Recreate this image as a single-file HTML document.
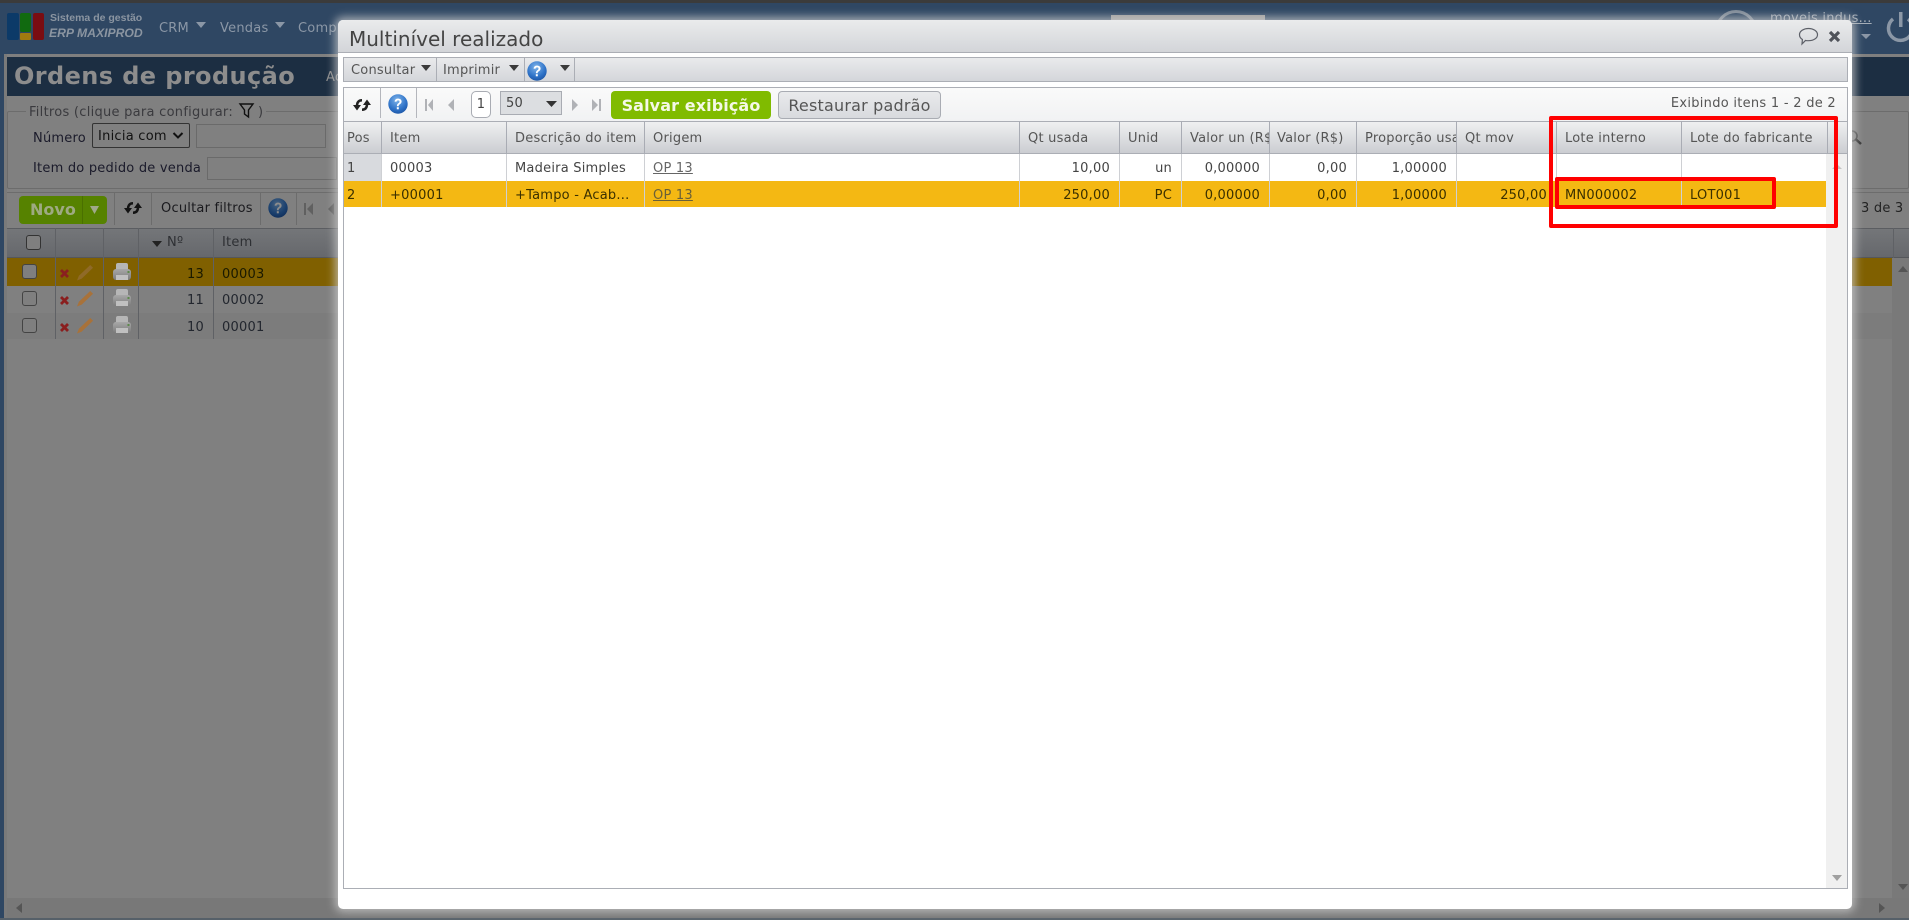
<!DOCTYPE html>
<html lang="pt"><head><meta charset="utf-8"><title>Multinível realizado</title>
<style>
*{box-sizing:border-box}
html,body{margin:0;padding:0;width:1909px;height:920px;overflow:hidden;background:#808080;font-family:"DejaVu Sans","Liberation Sans",sans-serif;font-size:13px;letter-spacing:.22px}
.a{position:absolute}
.t{position:absolute;white-space:nowrap;line-height:20px;height:20px}
.r{text-align:right}
.cell{position:absolute;overflow:hidden;white-space:nowrap;line-height:20px;height:20px}
svg{position:absolute;overflow:visible}
.v{position:absolute;width:1px}
.h{position:absolute;height:1px}
.bt{color:#2a2a2e}
.hd{color:#555}
.rw{color:#444}
.ro{color:#3a3000}
</style></head><body>
<svg width="0" height="0" style="position:absolute"><defs>
<radialGradient id="hg" cx=".45" cy=".3" r=".8"><stop offset="0" stop-color="#7fb4ea"/><stop offset=".6" stop-color="#2f73c8"/><stop offset="1" stop-color="#174d9c"/></radialGradient>
<linearGradient id="pb" x1="0" y1="0" x2="0" y2="1"><stop offset="0" stop-color="#a8a8a8"/><stop offset="1" stop-color="#7c7c7c"/></linearGradient>
<symbol id="help" viewBox="0 0 20 20"><circle cx="10" cy="10" r="9.7" fill="url(#hg)"/><path d="M6.600 7.600C6.800 5.500 8.200 4.600 10.100 4.600c2.100 0 3.500 1.100 3.500 2.900 0 1.500-.9 2.200-1.900 2.900-.8.6-1 .9-1 1.900H8.900c0-1.500.3-2.100 1.300-2.900.9-.6 1.300-1 1.300-1.800 0-.8-.5-1.200-1.400-1.200-1 0-1.400.5-1.600 1.300z" fill="#fff"/><rect x="8.800" y="13.200" width="2" height="2.100" fill="#fff"/></symbol>
<symbol id="ref" viewBox="0 0 18 14"><path d="M4 8C4 4 6 2.300 9 2.300M14 6C14 10 12 11.700 9 11.700" fill="none" stroke="#222" stroke-width="2.500"/><path d="M0 7h8l-4 5.500zM10 7h8l-4-5.500z" fill="#222"/></symbol>
<symbol id="ptr" viewBox="0 0 18 18"><rect x="3" y="0" width="12" height="8" rx="2" fill="#b6b6b6"/><rect x="0" y="6" width="18" height="11" rx="3" fill="url(#pb)"/><rect x="3" y="12" width="12" height="5" fill="#c0c0c0"/><rect x="14.500" y="8" width="2" height="2" fill="#5c8a4a"/></symbol>
<symbol id="pen" viewBox="0 0 18 18"><path d="M14 1l3 3L5 15.500 0 17.500 2 12.500z" fill="currentColor"/></symbol>
</defs></svg>

<!-- ===== background page ===== -->
<div class="a" style="left:0;top:0;width:1909px;height:3px;background:#3b3b3b"></div>
<div class="a" style="left:0;top:3px;width:1909px;height:51px;background:#2f4763"></div>
<div class="a" style="left:0;top:54px;width:4px;height:866px;background:#2f4763"></div>
<div class="a" style="left:4px;top:54px;width:1905px;height:3px;background:#7f7f7f"></div>
<div class="a" style="left:4px;top:54px;width:3px;height:866px;background:#7a7a7a"></div>
<div class="a" style="left:0;top:918px;width:1909px;height:2px;background:#566069"></div>

<!-- logo -->
<div class="a" style="left:7px;top:13px;width:12px;height:27px;background:#0c3a68;border-radius:2px"></div>
<div class="a" style="left:20px;top:13px;width:11px;height:19px;background:#116a10;border-radius:2px"></div>
<div class="a" style="left:20px;top:33px;width:11px;height:7px;background:#a07a10;border-radius:1px"></div>
<div class="a" style="left:33px;top:13px;width:11px;height:27px;background:#7a0d12;border-radius:2px"></div>
<div class="t" style="left:50px;top:8px;font-size:10.500px;letter-spacing:0;font-weight:bold;color:#8b95a1;font-family:'Liberation Sans',sans-serif">Sistema de gestão</div>
<div class="t" style="left:49px;top:23px;font-size:12.200px;letter-spacing:0;font-weight:bold;font-style:italic;color:#8b95a1;font-family:'Liberation Sans',sans-serif">ERP MAXIPROD</div>
<div class="t" style="left:159px;top:19px;color:#8b97a6">CRM</div>
<svg style="left:196px;top:22px" width="10" height="6"><path d="M0 0h10L5 6z" fill="#8b97a6"/></svg>
<div class="t" style="left:220px;top:19px;color:#8b97a6">Vendas</div>
<svg style="left:275px;top:22px" width="10" height="6"><path d="M0 0h10L5 6z" fill="#8b97a6"/></svg>
<div class="t" style="left:298px;top:19px;color:#8b97a6">Compras</div>
<div class="a" style="left:1111px;top:15px;width:154px;height:6px;background:#a09f9d"></div>
<div class="a" style="left:1715px;top:10px;width:42px;height:42px;border:3px solid #7f8b98;border-radius:50%"></div>
<div class="t" style="left:1770px;top:9px;color:#a4adb7;text-decoration:underline">moveis indus...</div>
<svg style="left:1858px;top:34px" width="14" height="6"><path d="M3 0h10L8 5z" fill="#8b97a6"/></svg>
<svg style="left:1887px;top:11px" width="24" height="30"><path d="M6 8a12 12 0 1 0 15 0" fill="none" stroke="#8b97a6" stroke-width="3.500"/><rect x="12" y="1" width="3.500" height="15" fill="#8b97a6"/></svg>

<!-- title bar -->
<div class="a" style="left:7px;top:57px;width:1902px;height:39px;background:#1c2e42"></div>
<div class="t" style="left:14px;top:62px;height:28px;line-height:28px;font-size:24px;letter-spacing:.4px;font-weight:bold;color:#8d8d8d">Ordens de produção</div>
<div class="t" style="left:326px;top:68px;color:#8b8b8b">Ac</div>

<!-- filters -->
<div class="a" style="left:7px;top:111px;width:1902px;height:78px;border:1px solid #6c6c6c;border-radius:2px"></div>
<div class="a" style="left:26px;top:104px;width:240px;height:15px;background:#808080"></div>
<div class="t bt" style="left:29px;top:103px;color:#3a3a3e;letter-spacing:.27px">Filtros (clique para configurar:</div>
<svg style="left:239px;top:103px" width="16" height="15"><path d="M1 1h13L9.500 7v7l-4-3V7z" fill="none" stroke="#111" stroke-width="1.400"/></svg>
<div class="t" style="left:258px;top:103px;color:#3a3a3e">)</div>
<div class="t bt" style="left:33px;top:129px;color:#1a1a2a">Número</div>
<div class="a" style="left:92px;top:123px;width:98px;height:25px;border:1px solid #333;border-radius:2px"></div>
<div class="t" style="left:98px;top:127px;color:#111;letter-spacing:.25px">Inicia com</div>
<svg style="left:172px;top:132px" width="12" height="8"><path d="M1.500 1l4.500 4.500L10.500 1" fill="none" stroke="#111" stroke-width="2"/></svg>
<div class="a" style="left:196px;top:124px;width:130px;height:24px;border:1px solid #6a6a6a"></div>
<div class="t bt" style="left:33px;top:159px;color:#1a1a2a;letter-spacing:.22px">Item do pedido de venda</div>
<div class="a" style="left:207px;top:157px;width:130px;height:23px;border:1px solid #6a6a6a"></div>

<!-- list toolbar -->
<div class="a" style="left:7px;top:192px;width:1902px;height:1px;background:#6c6c6c"></div>
<div class="a" style="left:19px;top:196px;width:88px;height:28px;background:#568200;border-radius:4px"></div>
<div class="a" style="left:82px;top:196px;width:1px;height:28px;background:#4a7000"></div>
<div class="t" style="left:30px;top:200px;font-size:16px;letter-spacing:0;font-weight:bold;color:#9eaa82">Novo</div>
<svg style="left:90px;top:206px" width="9" height="8"><path d="M0 0h9L4.500 8z" fill="#a0a98a"/></svg>
<div class="v" style="left:114px;top:192px;height:33px;background:#6c6c6c"></div>
<svg style="left:124px;top:201px;filter:brightness(.55)" width="18" height="14"><use href="#ref"/></svg>
<div class="v" style="left:151px;top:192px;height:33px;background:#6c6c6c"></div>
<div class="t" style="left:161px;top:199px;color:#1a1a1e;letter-spacing:.22px">Ocultar filtros</div>
<div class="v" style="left:260px;top:192px;height:33px;background:#6c6c6c"></div>
<svg style="left:268px;top:198px;filter:brightness(.55)" width="20" height="20"><use href="#help"/></svg>
<div class="v" style="left:296px;top:192px;height:33px;background:#6c6c6c"></div>
<svg style="left:304px;top:202px" width="30" height="14"><path d="M0 1h2v12H0zM9 1v12L3 7zM30 1v12l-6-6z" fill="#606060"/></svg>

<!-- list table -->
<div class="a" style="left:7px;top:228px;width:1902px;height:30px;background:linear-gradient(#747679,#66686c);border-top:1px solid #5b5d61;border-bottom:1px solid #55575b"></div>
<div class="a" style="left:7px;top:258px;width:1902px;height:28px;background:#806000"></div>
<div class="a" style="left:7px;top:286px;width:1902px;height:27px;background:#808080"></div>
<div class="a" style="left:7px;top:313px;width:1902px;height:26px;background:#7c7c7c"></div>
<div class="v" style="left:55px;top:228px;height:111px;background:#5f6165"></div>
<div class="v" style="left:103px;top:228px;height:111px;background:#5f6165"></div>
<div class="v" style="left:138px;top:228px;height:111px;background:#5f6165"></div>
<div class="v" style="left:213px;top:228px;height:111px;background:#5f6165"></div>
<div class="a" style="left:26px;top:235px;width:15px;height:15px;border:1.500px solid #333;border-radius:3px;background:#7f7f7f"></div>
<div class="a" style="left:22px;top:264px;width:15px;height:15px;border:1.500px solid #444;border-radius:3px;background:#7f7f7f"></div>
<div class="a" style="left:22px;top:291px;width:15px;height:15px;border:1.500px solid #444;border-radius:3px;background:#7f7f7f"></div>
<div class="a" style="left:22px;top:318px;width:15px;height:15px;border:1.500px solid #444;border-radius:3px;background:#7f7f7f"></div>
<svg style="left:152px;top:241px" width="10" height="6"><path d="M0 0h10L5 6z" fill="#222"/></svg>
<div class="t" style="left:167px;top:233px;color:#2e3034">Nº</div>
<div class="t" style="left:222px;top:233px;color:#2e3034">Item</div>
<div class="t r bt" style="left:150px;top:265px;width:54px;color:#1a1a00">13</div>
<div class="t bt" style="left:222px;top:265px;color:#1a1a00">00003</div>
<div class="t r bt" style="left:150px;top:291px;width:54px;color:#22262e">11</div>
<div class="t bt" style="left:222px;top:291px;color:#22262e">00002</div>
<div class="t r bt" style="left:150px;top:318px;width:54px;color:#22262e">10</div>
<div class="t bt" style="left:222px;top:318px;color:#22262e">00001</div>
<!-- row icons -->
<svg style="left:60px;top:269px" width="9" height="9"><path d="M1 1l7 7M8 1L1 8" stroke="#8a1f1f" stroke-width="2.800"/></svg>
<svg style="left:60px;top:296px" width="9" height="9"><path d="M1 1l7 7M8 1L1 8" stroke="#8a1f1f" stroke-width="2.800"/></svg>
<svg style="left:60px;top:323px" width="9" height="9"><path d="M1 1l7 7M8 1L1 8" stroke="#8a1f1f" stroke-width="2.800"/></svg>
<svg style="left:77px;top:264px;color:#8f6a28" width="17" height="17"><use href="#pen"/></svg>
<svg style="left:77px;top:290px;color:#a8723a" width="17" height="17"><use href="#pen"/></svg>
<svg style="left:77px;top:317px;color:#a8723a" width="17" height="17"><use href="#pen"/></svg>
<svg style="left:113px;top:263px" width="18" height="18"><use href="#ptr"/></svg>
<svg style="left:113px;top:289px" width="18" height="18"><use href="#ptr"/></svg>
<svg style="left:113px;top:316px" width="18" height="18"><use href="#ptr"/></svg>

<!-- right side bg -->
<svg style="left:1845px;top:130px" width="18" height="14"><circle cx="7" cy="6" r="5" fill="none" stroke="#444" stroke-width="1.500"/><path d="M10.500 9l5.500 5" stroke="#333" stroke-width="2.500"/></svg>
<div class="t" style="left:1861px;top:199px;color:#222">3 de 3</div>
<div class="v" style="left:1893px;top:228px;height:30px;background:#5f6165"></div>
<div class="a" style="left:1892px;top:258px;width:17px;height:660px;background:#797979"></div>
<svg style="left:1898px;top:266px" width="10" height="6"><path d="M0 6h10L5 0z" fill="#555"/></svg>
<svg style="left:1898px;top:884px" width="10" height="6"><path d="M0 0h10L5 6z" fill="#555"/></svg>
<div class="a" style="left:7px;top:898px;width:1902px;height:20px;background:#787878"></div>
<svg style="left:16px;top:903px" width="6" height="10"><path d="M6 0v10L0 5z" fill="#555"/></svg>
<svg style="left:1879px;top:903px" width="6" height="10"><path d="M0 0v10l6-5z" fill="#555"/></svg>

<!-- ===== modal ===== -->
<div class="a" style="left:338px;top:20px;width:1514px;height:889px;background:#fff;border-radius:5px;box-shadow:0 0 9px 3px rgba(205,205,205,.75)"></div>
<div class="a" style="left:338px;top:20px;width:1514px;height:33px;background:linear-gradient(#eaebec,#d3d5d9);border-bottom:1px solid #abaeb5;border-radius:5px 5px 0 0"></div>
<div class="t" style="left:349px;top:27px;height:24px;line-height:24px;font-size:20px;letter-spacing:0;color:#444">Multinível realizado</div>
<svg style="left:1798px;top:27px" width="21" height="19"><path d="M10.500 1.500c5 0 9 2.700 9 6.200s-4 6-9 6c-1 0-2 0-3-.3l-3.500 3.600.4-4.500C2.700 11.400 1.500 9.700 1.500 7.700c0-3.500 4-6.200 9-6.200z" fill="none" stroke="#5d6068" stroke-width="1.200"/></svg>
<svg style="left:1828px;top:30px" width="14" height="14"><path d="M2 2l9 9M11 2l-9 9" stroke="#50535a" stroke-width="3.200"/></svg>

<!-- modal toolbar -->
<div class="a" style="left:343px;top:57px;width:1505px;height:25px;background:linear-gradient(#e9eaec,#d4d6da);border:1px solid #abaeb5"></div>
<div class="t" style="left:351px;top:61px;color:#555">Consultar</div>
<svg style="left:421px;top:65px" width="10" height="6"><path d="M0 0h10L5 6z" fill="#3a3a3a"/></svg>
<div class="v" style="left:436px;top:57px;height:25px;background:#abaeb5"></div>
<div class="t" style="left:443px;top:61px;color:#555">Imprimir</div>
<svg style="left:509px;top:65px" width="10" height="6"><path d="M0 0h10L5 6z" fill="#3a3a3a"/></svg>
<div class="v" style="left:524px;top:57px;height:25px;background:#abaeb5"></div>
<svg style="left:527px;top:61px" width="20" height="20"><use href="#help"/></svg>
<svg style="left:560px;top:65px" width="10" height="6"><path d="M0 0h10L5 6z" fill="#3a3a3a"/></svg>
<div class="v" style="left:574px;top:57px;height:25px;background:#abaeb5"></div>

<!-- grid -->
<div class="a" style="left:343px;top:87px;width:1505px;height:802px;background:#fff;border:1px solid #abaeb5"></div>
<div class="a" style="left:344px;top:88px;width:1503px;height:33px;background:linear-gradient(#fafafa,#f1f2f3)"></div>
<svg style="left:353px;top:98px" width="18" height="14"><use href="#ref"/></svg>
<div class="v" style="left:380px;top:88px;height:30px;background:#b4b6bc"></div>
<svg style="left:388px;top:94px" width="20" height="20"><use href="#help"/></svg>
<div class="v" style="left:416px;top:88px;height:30px;background:#b4b6bc"></div>
<svg style="left:425px;top:98px" width="30" height="14"><path d="M0 1h2v12H0zM8 1v12L3 7zM29 1v12l-6-6z" fill="#b0b2b6"/></svg>
<div class="a" style="left:471px;top:91px;width:20px;height:27px;background:#fff;border:1px solid #a9acb3;border-radius:5px"></div>
<div class="t" style="left:471px;top:95px;width:20px;text-align:center;color:#444">1</div>
<div class="a" style="left:500px;top:91px;width:62px;height:24px;background:#dcdee1;border:1px solid #a9acb3"></div>
<div class="t" style="left:506px;top:94px;color:#444">50</div>
<svg style="left:546px;top:101px" width="11" height="6"><path d="M0 0h11L5.500 6z" fill="#333"/></svg>
<svg style="left:572px;top:98px" width="30" height="14"><path d="M0 1v12l6-6zM20 1v12l6-6zM27 1h2v12h-2z" fill="#b0b2b6"/></svg>
<div class="a" style="left:611px;top:91px;width:160px;height:28px;background:#80bb00;border-radius:4px"></div>
<div class="t" style="left:611px;top:96px;width:160px;text-align:center;font-size:16px;letter-spacing:.1px;font-weight:bold;color:#f4f8e6">Salvar exibição</div>
<div class="a" style="left:778px;top:91px;width:163px;height:28px;background:linear-gradient(#e9eaec,#d8dade);border:1px solid #a9acb3;border-radius:4px"></div>
<div class="t" style="left:778px;top:96px;width:163px;text-align:center;font-size:16px;letter-spacing:.2px;color:#555">Restaurar padrão</div>
<div class="t r" style="left:1600px;top:94px;width:236px;color:#555;letter-spacing:.28px">Exibindo itens 1 - 2 de 2</div>

<!-- grid header -->
<div class="a" style="left:344px;top:121px;width:1503px;height:33px;background:linear-gradient(#eff0f1,#cbcdd2);border-top:1px solid #abaeb5;border-bottom:1px solid #abaeb5"></div>
<div class="a" style="left:344px;top:154px;width:37px;height:27px;background:#d8dade"></div>
<div class="a" style="left:1826px;top:154px;width:21px;height:734px;background:#f0f0f0"></div>
<div class="a" style="left:344px;top:181px;width:1482px;height:26px;background:#f4b813"></div>
<!-- column separators -->
<div class="v" style="left:381px;top:121px;height:33px;background:#a9acb4"></div>
<div class="v" style="left:506px;top:121px;height:33px;background:#a9acb4"></div>
<div class="v" style="left:644px;top:121px;height:33px;background:#a9acb4"></div>
<div class="v" style="left:1019px;top:121px;height:33px;background:#a9acb4"></div>
<div class="v" style="left:1119px;top:121px;height:33px;background:#a9acb4"></div>
<div class="v" style="left:1181px;top:121px;height:33px;background:#a9acb4"></div>
<div class="v" style="left:1269px;top:121px;height:33px;background:#a9acb4"></div>
<div class="v" style="left:1356px;top:121px;height:33px;background:#a9acb4"></div>
<div class="v" style="left:1456px;top:121px;height:33px;background:#a9acb4"></div>
<div class="v" style="left:1556px;top:121px;height:33px;background:#a9acb4"></div>
<div class="v" style="left:1681px;top:121px;height:33px;background:#a9acb4"></div>
<div class="v" style="left:1827px;top:121px;height:33px;background:#a9acb4"></div>
<!-- row separators -->
<div class="v" style="left:381px;top:154px;height:53px;background:#ced0d4"></div>
<div class="v" style="left:506px;top:154px;height:53px;background:#ced0d4"></div>
<div class="v" style="left:644px;top:154px;height:53px;background:#ced0d4"></div>
<div class="v" style="left:1019px;top:154px;height:53px;background:#ced0d4"></div>
<div class="v" style="left:1119px;top:154px;height:53px;background:#ced0d4"></div>
<div class="v" style="left:1181px;top:154px;height:53px;background:#ced0d4"></div>
<div class="v" style="left:1269px;top:154px;height:53px;background:#ced0d4"></div>
<div class="v" style="left:1356px;top:154px;height:53px;background:#ced0d4"></div>
<div class="v" style="left:1456px;top:154px;height:53px;background:#ced0d4"></div>
<div class="v" style="left:1556px;top:154px;height:53px;background:#ced0d4"></div>
<div class="v" style="left:1681px;top:154px;height:53px;background:#ced0d4"></div>

<!-- header labels -->
<div class="t hd" style="left:347px;top:129px">Pos</div>
<div class="t hd" style="left:390px;top:129px">Item</div>
<div class="t hd" style="left:515px;top:129px">Descrição do item</div>
<div class="t hd" style="left:653px;top:129px">Origem</div>
<div class="t hd" style="left:1028px;top:129px">Qt usada</div>
<div class="t hd" style="left:1128px;top:129px">Unid</div>
<div class="cell hd" style="left:1190px;top:129px;width:79px">Valor un (R$)</div>
<div class="t hd" style="left:1277px;top:129px">Valor (R$)</div>
<div class="cell hd" style="left:1365px;top:129px;width:91px">Proporção usada</div>
<div class="t hd" style="left:1465px;top:129px">Qt mov</div>
<div class="t hd" style="left:1565px;top:129px">Lote interno</div>
<div class="t hd" style="left:1690px;top:129px">Lote do fabricante</div>

<!-- row 1 -->
<div class="t rw" style="left:347px;top:159px">1</div>
<div class="t rw" style="left:390px;top:159px">00003</div>
<div class="t rw" style="left:515px;top:159px">Madeira Simples</div>
<div class="t rw" style="left:653px;top:159px;text-decoration:underline;color:#666">OP 13</div>
<div class="t r rw" style="left:1020px;top:159px;width:90px">10,00</div>
<div class="t r rw" style="left:1120px;top:159px;width:52px">un</div>
<div class="t r rw" style="left:1182px;top:159px;width:78px">0,00000</div>
<div class="t r rw" style="left:1270px;top:159px;width:77px">0,00</div>
<div class="t r rw" style="left:1357px;top:159px;width:90px">1,00000</div>
<!-- row 2 -->
<div class="t ro" style="left:347px;top:186px">2</div>
<div class="t ro" style="left:390px;top:186px">+00001</div>
<div class="t ro" style="left:515px;top:186px">+Tampo - Acab...</div>
<div class="t" style="left:653px;top:186px;text-decoration:underline;color:#6a6038">OP 13</div>
<div class="t r ro" style="left:1020px;top:186px;width:90px">250,00</div>
<div class="t r ro" style="left:1120px;top:186px;width:52px">PC</div>
<div class="t r ro" style="left:1182px;top:186px;width:78px">0,00000</div>
<div class="t r ro" style="left:1270px;top:186px;width:77px">0,00</div>
<div class="t r ro" style="left:1357px;top:186px;width:90px">1,00000</div>
<div class="t r ro" style="left:1457px;top:186px;width:90px">250,00</div>
<div class="t ro" style="left:1565px;top:186px">MN000002</div>
<div class="t ro" style="left:1690px;top:186px">LOT001</div>

<!-- scroll arrows -->
<svg style="left:1832px;top:164px" width="10" height="5"><path d="M0 5h10L5 0z" fill="#c4c4c4"/></svg>
<svg style="left:1832px;top:875px" width="10" height="6"><path d="M0 0h10L5 6z" fill="#a0a0a0"/></svg>

<!-- red annotations -->
<div class="a" style="left:1549px;top:116px;width:289px;height:112px;border:4px solid #f00;border-radius:2px"></div>
<div class="a" style="left:1555px;top:177px;width:221px;height:32px;border:4px solid #f00;border-radius:2px"></div>
</body></html>
